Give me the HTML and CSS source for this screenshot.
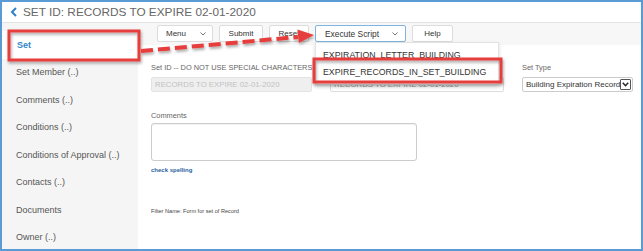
FILE: index.html
```html
<!DOCTYPE html>
<html>
<head>
<meta charset="utf-8">
<link rel="stylesheet" href="styles.css">
</head>
<body>
<div class="frame">
  <header class="head">
    <svg class="back" width="8" height="10" viewBox="0 0 8 10"><polyline points="6,1 2,5 6,9" fill="none" stroke="#2f7fd0" stroke-width="2"/></svg>
    <span class="title">SET ID: RECORDS TO EXPIRE 02-01-2020</span>
  </header>
  <div class="body">
    <nav class="side">
      <div class="item active">Set</div>
      <div class="item">Set Member (..)</div>
      <div class="item">Comments (..)</div>
      <div class="item">Conditions (..)</div>
      <div class="item">Conditions of Approval (..)</div>
      <div class="item">Contacts (..)</div>
      <div class="item">Documents</div>
      <div class="item">Owner (..)</div>
    </nav>
    <main class="main">
      <div class="toolbar">
        <button class="btn menu"><span>Menu</span><svg class="chev" width="6" height="4" viewBox="0 0 6 4"><polyline points="0.5,0.5 3,3 5.5,0.5" fill="none" stroke="#777" stroke-width="1"/></svg></button>
        <button class="btn submit">Submit</button>
        <button class="btn reset">Reset</button>
        <div class="exec-wrap">
          <button class="btn exec"><span>Execute Script</span><svg class="chev" width="6" height="4" viewBox="0 0 6 4"><polyline points="0.5,0.5 3,3 5.5,0.5" fill="none" stroke="#777" stroke-width="1"/></svg></button>
          <ul class="dropdown">
            <li>EXPIRATION_LETTER_BUILDING</li>
            <li>EXPIRE_RECORDS_IN_SET_BUILDING</li>
          </ul>
        </div>
        <button class="btn help">Help</button>
      </div>
      <div class="content">
        <div class="row">
          <div class="field f1">
            <div class="label">Set ID -- DO NOT USE SPECIAL CHARACTERS</div>
            <div class="input disabled">RECORDS TO EXPIRE 02-01-2020</div>
          </div>
          <div class="field f2">
            <div class="label">&nbsp;</div>
            <div class="input">RECORDS TO EXPIRE 02-01-2020</div>
          </div>
          <div class="field f3">
            <div class="label">Set Type</div>
            <div class="select"><span class="sel-text">Building Expiration Records</span><span class="sel-arrow"><svg width="7" height="5" viewBox="0 0 7 5"><polyline points="0.8,0.8 3.5,3.8 6.2,0.8" fill="none" stroke="#222" stroke-width="1.4"/></svg></span></div>
          </div>
        </div>
        <div class="field comments">
          <div class="label">Comments</div>
          <div class="textarea"></div>
        </div>
        <div class="spell">check spelling</div>
        <div class="filter">Filter Name: Form for set of Record</div>
      </div>
    </main>
  </div>
  <svg class="annot" width="643" height="251" viewBox="0 0 643 251">
    <defs>
      <filter id="sh" x="-10%" y="-30%" width="120%" height="160%">
        <feDropShadow dx="1" dy="2" stdDeviation="1.5" flood-color="#000" flood-opacity="0.35"/>
      </filter>
    </defs>
    <g filter="url(#sh)" fill="none" stroke="#e63c3c">
      <rect x="9" y="31" width="130" height="29" stroke-width="3"/>
      <rect x="314" y="59" width="187" height="23" stroke-width="3"/>
      <line x1="141" y1="51" x2="298" y2="37" stroke-width="4" stroke-dasharray="12 5"/>
      <polygon points="314,35 297.5,29.5 298.8,43" fill="#e63c3c" stroke="none"/>
    </g>
  </svg>
</div>
</body>
</html>
```
FILE: styles.css
```css
* { box-sizing: border-box; }
html, body { margin: 0; padding: 0; }
body {
  width: 643px;
  height: 251px;
  overflow: hidden;
  background: #fff;
  font-family: "Liberation Sans", Arial, sans-serif;
}
.frame {
  position: relative;
  width: 643px;
  height: 251px;
  border: 2px solid #5b9bd5;
  display: flex;
  flex-direction: column;
  overflow: hidden;
}
.head {
  height: 21px;
  flex: none;
  display: flex;
  align-items: center;
  padding-left: 8px;
  border-bottom: 1px solid #e4e4e4;
  background: #fff;
}
.back { margin-right: 5px; }
.title {
  font-size: 11.8px;
  color: #666;
  letter-spacing: 0;
}
.body {
  flex: 1;
  display: flex;
  min-height: 0;
}
.side {
  width: 136px;
  flex: none;
  background: #f5f5f5;
  padding-top: 8px;
}
.item {
  height: 27.5px;
  display: flex;
  align-items: center;
  padding-left: 14px;
  font-size: 9px;
  color: #555;
  white-space: nowrap;
}
.item.active {
  background: #fff;
  color: #2f86c8;
  font-weight: bold;
  padding-left: 15px;
}
.main {
  flex: 1;
  display: flex;
  flex-direction: column;
  min-width: 0;
}
.toolbar {
  height: 22px;
  flex: none;
  background: #f7f7f7;
  display: flex;
  align-items: flex-start;
  gap: 6px;
  padding: 2px 0 0 19px;
}
.btn {
  height: 17px;
  margin: 0;
  padding: 0;
  border: 1px solid #dcdcdc;
  border-radius: 2px;
  background: #fff;
  font-family: "Liberation Sans", Arial, sans-serif;
  font-size: 8px;
  color: #333;
  display: flex;
  align-items: center;
  justify-content: center;
}
.menu { width: 56px; justify-content: space-between; padding: 0 6px 0 8px; }
.submit { width: 44px; }
.reset { width: 40px; }
.help { width: 41px; }
.exec-wrap { position: relative; }
.exec {
  width: 91px;
  justify-content: space-between;
  padding: 0 7px 0 9px;
  border-color: #7fb3e3;
  font-size: 8.4px;
}
.dropdown {
  position: absolute;
  left: 0;
  top: 17px;
  width: 184px;
  margin: 0;
  padding: 4px 0 3px;
  list-style: none;
  background: #fff;
  border: 1px solid #e2e2e2;
  box-shadow: 0 2px 4px rgba(0,0,0,0.15);
  z-index: 5;
}
.dropdown li {
  height: 17px;
  line-height: 17px;
  padding-left: 7px;
  font-size: 8.8px;
  color: #333;
  white-space: nowrap;
}
.content {
  padding: 18px 0 0 13px;
}
.row {
  display: flex;
  gap: 18px;
}
.field { display: flex; flex-direction: column; }
.label {
  height: 9px;
  line-height: 9px;
  font-size: 7.4px;
  color: #666;
  white-space: nowrap;
  margin-bottom: 4.5px;
}
.f1 { width: 161px; }
.f2 { width: 174px; }
.f3 { width: 111px; }
.input {
  height: 15px;
  line-height: 13px;
  border: 1px solid #ddd;
  border-radius: 2px;
  padding-left: 3px;
  font-size: 7.8px;
  color: #999;
  white-space: nowrap;
  overflow: hidden;
  background: #fff;
}
.input.disabled {
  background: #efefef;
  border-color: #e3e3e3;
  color: #c2c2c2;
}
.select {
  height: 15px;
  border: 1px solid #ccc;
  border-radius: 2px;
  display: flex;
  align-items: center;
  padding-left: 3px;
  font-size: 8px;
  color: #333;
  background: #fff;
  overflow: hidden;
}
.sel-text {
  flex: 1;
  white-space: nowrap;
  overflow: hidden;
}
.sel-arrow {
  width: 11px;
  height: 11px;
  flex: none;
  margin-right: 1px;
  border: 1px solid #555;
  border-radius: 1px;
  display: flex;
  align-items: center;
  justify-content: center;
  background: #fff;
}
.comments { margin-top: 19.5px; width: 266px; }
.comments .label { margin-bottom: 2.5px; }
.textarea {
  height: 38px;
  border: 1px solid #ccc;
  border-radius: 3px;
  box-shadow: inset 0 1px 1px rgba(0,0,0,0.06);
}
.spell {
  margin-top: 5px;
  height: 8px;
  line-height: 8px;
  font-size: 6px;
  font-weight: bold;
  color: #2a5f9e;
}
.filter {
  margin-top: 33px;
  height: 8px;
  line-height: 8px;
  font-size: 5.6px;
  color: #444;
}
.annot {
  position: absolute;
  left: -2px;
  top: -2px;
  pointer-events: none;
  z-index: 10;
}
```
